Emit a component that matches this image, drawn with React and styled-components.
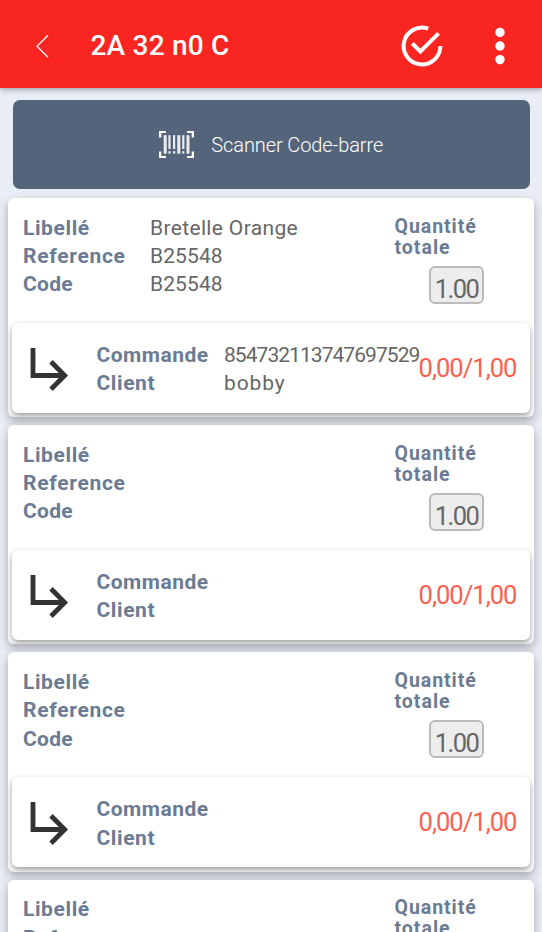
import React from "react";
import styled, { createGlobalStyle } from "styled-components";

const orders = [
    {
        id: 1,
        label: "Bretelle Orange",
        reference: "B25548",
        code: "B25548",
        commande: "854732113747697529",
        client: "bobby",
    },
    { id: 2 },
    { id: 3 },
    { id: 4 },
];

const BackIcon = () => (
    <svg width="14" height="24" viewBox="0 0 14 24" fill="none" stroke="#fff" strokeWidth="1.3">
        <path d="M13 1.2 L2 12.3 L13 23.3" />
    </svg>
);

const CheckIcon = () => (
    <svg width="42" height="42" viewBox="0 0 42 42" fill="none" stroke="#fff" strokeWidth="4">
        <path d="M27.2 3.7 A18.4 18.4 0 1 0 39.4 21" />
        <path d="M11.3 18.5 L19.4 26.4 L37.6 8.4" />
    </svg>
);

const MoreIcon = () => (
    <svg width="10" height="38" viewBox="0 0 10 38" fill="#fff">
        <circle cx="5" cy="5.4" r="4.7" />
        <circle cx="5" cy="19" r="4.7" />
        <circle cx="5" cy="32.6" r="4.7" />
    </svg>
);

const BarcodeIcon = () => (
    <svg width="35" height="27" viewBox="0 0 35 27" fill="#fff">
        <path d="M0 0H7V2H2.3V6.5H0Z M28 0H35V6.5H32.7V2H28Z M0 20.5H2.3V25H7V27H0Z M32.7 20.5H35V27H28V25H32.7Z" />
        <g opacity="0.88">
            <rect x="4.7" y="4.2" width="3" height="18.5" />
            <rect x="9.4" y="4.2" width="2.2" height="13.8" />
            <rect x="14" y="4.2" width="2.2" height="13.8" />
            <rect x="18.3" y="4.2" width="3" height="18.5" />
            <rect x="23.2" y="4.2" width="2.2" height="13.8" />
            <rect x="27.5" y="4.2" width="3" height="18.5" />
            <rect x="9.4" y="20.2" width="2.2" height="2.4" />
            <rect x="14" y="20.2" width="2.2" height="2.4" />
            <rect x="23.2" y="20.2" width="2.2" height="2.4" />
        </g>
    </svg>
);

const ArrowIcon = () => (
    <svg width="40" height="44" viewBox="0 0 40 44" fill="none" stroke="#333" strokeWidth="4.8">
        <path d="M3 1 V28.5 H34.5" />
        <path d="M21 14.8 L34.7 28.5 L21 42.2" />
    </svg>
);

const OrderCard = ({ order }) => {
    return (
        <Card>
            <CardTop>
                <Names>
                    <Name $spacing="0.6px">Libellé</Name>
                    <Name $spacing="0.7px">Reference</Name>
                    <Name $spacing="0.3px">Code</Name>
                </Names>
                <Values>
                    <Value $spacing="0.35px">{order.label}</Value>
                    <Value $spacing="0.1px">{order.reference}</Value>
                    <Value $spacing="0.1px">{order.code}</Value>
                </Values>
                <Quantity>
                    <QuantityTitle $spacing="0.95px">Quantité</QuantityTitle>
                    <QuantityTitle $spacing="1px">totale</QuantityTitle>
                    <QuantityBox>1.00</QuantityBox>
                </Quantity>
            </CardTop>
            <SubCard>
                <ArrowIcon />
                <SubNames>
                    <Name $spacing="0.5px">Commande</Name>
                    <Name $spacing="0.6px">Client</Name>
                </SubNames>
                <SubValues>
                    <Value $spacing="-0.95px">{order.commande}</Value>
                    <Value $spacing="0.9px">{order.client}</Value>
                </SubValues>
                <Progress>0,00/1,00</Progress>
            </SubCard>
        </Card>
    );
};

const App = () => {
    return (
        <>
            <GlobalStyle />
            <Screen>
                <Header>
                    <BackIcon />
                    <Title>2A 32 n0 C</Title>
                    <CheckIcon />
                    <MoreIcon />
                </Header>
                <ScanButton>
                    <BarcodeIcon />
                    <ScanText>Scanner Code-barre</ScanText>
                </ScanButton>
                <CardList>
                    {orders.map((order) => (
                        <OrderCard key={order.id} order={order} />
                    ))}
                </CardList>
            </Screen>
        </>
    );
};

export default App;

const GlobalStyle = createGlobalStyle`
    * {
        box-sizing: border-box;
    }
    body {
        margin: 0;
        overflow: hidden;
        font-family: Roboto, "Liberation Sans", sans-serif;
    }
    svg {
        display: block;
        flex-shrink: 0;
    }
`

const Screen = styled.div`
    height: 932px;
    overflow: hidden;
    background-color: #e9eef6;
`

const Header = styled.header`
    display: flex;
    align-items: center;
    height: 87.5px;
    padding: 4px 37px 0 35px;
    background-color: #f92520;
    box-shadow: 0 2px 5px rgba(0, 0, 0, 0.3);
`

const Title = styled.h1`
    flex: 1;
    margin: 0 0 0 41.5px;
    color: #fff;
    font-size: 28px;
    font-weight: 500;
    letter-spacing: 0.2px;

    & + svg {
        margin-right: 52.5px;
    }
`

const ScanButton = styled.button`
    display: flex;
    align-items: center;
    justify-content: center;
    width: 517px;
    height: 89px;
    margin: 12.5px 0 0 12.5px;
    padding: 0;
    border: none;
    border-radius: 7px;
    background-color: #54647a;
`

const ScanText = styled.span`
    margin-left: 17.5px;
    color: #fff;
    font-family: Roboto, sans-serif;
    font-size: 20px;
    font-weight: 300;
    letter-spacing: -0.1px;
`

const CardList = styled.div`
    display: flex;
    flex-direction: column;
    gap: 8px;
    padding: 9px 8px 0;
`

const Card = styled.div`
    flex-shrink: 0;
    height: 219.2px;
    padding: 0 4px;
    border-radius: 6px;
    background-color: #fff;
    box-shadow: 0 4px 10px rgba(0, 0, 0, 0.3);
    overflow: hidden;
`

const CardTop = styled.div`
    display: flex;
    height: 125px;
    padding: 15.8px 0 0 11px;
`

const Names = styled.div`
    width: 127px;
`

const Name = styled.div`
    height: 28.2px;
    color: #6b7b93;
    font-size: 21px;
    font-weight: 700;
    line-height: 28.2px;
    letter-spacing: ${({ $spacing }) => $spacing || "0"};
`

const Values = styled.div`
    width: 244.5px;
`

const Value = styled.div`
    height: 28.2px;
    color: #666;
    font-size: 21px;
    line-height: 28.2px;
    white-space: nowrap;
    letter-spacing: ${({ $spacing }) => $spacing || "0"};
`

const Quantity = styled.div`
    width: 100px;
    padding-top: 2px;
`

const QuantityTitle = styled.div`
    color: #6b7b93;
    font-size: 19.5px;
    font-weight: 700;
    line-height: 21px;
    letter-spacing: ${({ $spacing }) => $spacing || "0"};
`

const QuantityBox = styled.div`
    width: 55px;
    height: 38px;
    margin: 8px 0 0 34.5px;
    padding-top: 3px;
    border: 2px solid #bbb;
    border-radius: 6px;
    background-color: #ededed;
    color: #666;
    font-size: 25.5px;
    line-height: 36px;
    letter-spacing: -1.6px;
    text-align: center;
`

const SubCard = styled.div`
    display: flex;
    height: 90px;
    padding: 18px 0 0 18px;
    border-radius: 6px;
    background-color: #fff;
    box-shadow: 0 3px 6px rgba(0, 0, 0, 0.38);

    & > svg {
        margin-top: 6px;
    }
`

const SubNames = styled.div`
    width: 127.5px;
    margin-left: 26.5px;
`

const SubValues = styled.div`
    width: 194.5px;
`

const Progress = styled.div`
    padding-top: 9px;
    color: #fb5f50;
    font-size: 25.5px;
    line-height: 36px;
    letter-spacing: -0.95px;
    white-space: nowrap;
`
